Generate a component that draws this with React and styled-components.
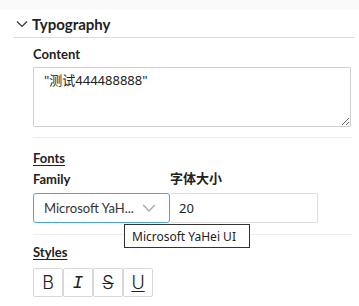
import React from 'react'
import styled, { createGlobalStyle } from 'styled-components'

const Global = createGlobalStyle`
  body {
    margin: 0;
    background: #fff;
    font-family: Lato, "Noto Sans", "Noto Sans CJK SC", sans-serif;
    color: #1f1f1f;
  }
`

const Panel = styled.div`
  width: 359px;
  height: 306px;
  overflow: hidden;
  background: #fff;
`

const TopBand = styled.div`
  height: 10px;
  background: #fafafa;
`

const Header = styled.div`
  display: flex;
  align-items: center;
  gap: 4px;
  height: 28px;
  margin: 0 4px 0 13px;
  padding-left: 3px;
  border-bottom: 1px solid #dcdcdc;
  box-sizing: border-box;
  font-size: 15px;
  font-weight: 700;
  color: #222;
`

const Body = styled.div`
  padding: 0 7px 0 33px;
`

const Label = styled.div`
  height: ${p => p.h || 20}px;
  display: flex;
  align-items: flex-end;
  font-size: 13px;
  font-weight: 700;
  color: #222;
  text-decoration: ${p => (p.u ? 'underline' : 'none')};
  text-underline-offset: 2px;
`

const TextArea = styled.textarea`
  display: block;
  width: 318px;
  height: 60px;
  box-sizing: border-box;
  border: 1px solid #cfcfcf;
  border-radius: 1px;
  padding: 2px 10px;
  font-family: "Noto Sans", "Noto Sans CJK SC", sans-serif;
  font-size: 13px;
  color: #222;
  resize: vertical;
  outline: none;
`

const Divider = styled.div`
  height: 1px;
  background: #eeeeee;
  margin-top: ${p => p.mt}px;
`

const Row = styled.div`
  display: flex;
`

const Col = styled.div`
  width: ${p => p.w}px;
  position: relative;
`

const Select = styled.div`
  height: 30px;
  box-sizing: border-box;
  border: 1px solid #4aa3f0;
  border-radius: 3px;
  display: flex;
  align-items: center;
  justify-content: space-between;
  padding: 0 13px 0 10px;
  font-size: 13px;
  color: #333;
`

const Input = styled.div`
  height: 30px;
  box-sizing: border-box;
  border: 1px solid #dedede;
  border-left: none;
  display: flex;
  align-items: center;
  padding-left: 9px;
  font-family: "Noto Sans", sans-serif;
  font-size: 13px;
  color: #222;
`

const Tooltip = styled.div`
  position: absolute;
  left: 91px;
  top: 31px;
  width: 126px;
  height: 24px;
  box-sizing: border-box;
  border: 1px solid #333;
  background: #fff;
  font-family: "Noto Sans", sans-serif;
  font-size: 12px;
  color: #222;
  display: flex;
  align-items: center;
  padding-left: 7px;
  white-space: nowrap;
  z-index: 2;
`

const Buttons = styled.div`
  display: flex;
  margin-top: 8px;
`

const StyleButton = styled.div`
  width: 30px;
  height: 29px;
  box-sizing: border-box;
  border: 1px solid #d8d8d8;
  border-radius: 2px;
  display: flex;
  align-items: center;
  justify-content: center;
  font-family: ${p => (p.mono ? '"Liberation Mono", monospace' : 'Inter, "Noto Sans", sans-serif')};
  font-weight: 300;
  font-size: 18px;
  color: #222;
  font-style: ${p => (p.i ? 'italic' : 'normal')};
  text-decoration: ${p => p.deco || 'none'};
  text-decoration-thickness: 1px;
  text-underline-offset: 2px;
`

const Chevron = ({ size = 12, color = '#333' }) => (
  <svg width={size} height={size} viewBox="0 0 12 12" fill="none">
    <path d="M1 3.5 L6 8.5 L11 3.5" stroke={color} strokeWidth="1.2" />
  </svg>
)

export default function App() {
  return (
    <Panel>
      <Global />
      <TopBand />
      <Header>
        <Chevron size={12} color="#333" />
        <span>Typography</span>
      </Header>
      <Body>
        <Label h={24}>Content</Label>
        <div style={{ height: 5 }} />
        <TextArea defaultValue={'"测试444488888"'} />
        <Divider mt={10} />
        <Label h={28} u>Fonts</Label>
        <Row>
          <Label h={21} style={{ width: 137 }}>Family</Label>
          <Label h={21}>字体大小</Label>
        </Row>
        <Row style={{ marginTop: 6 }}>
          <Col w={137}>
            <Select>
              <span>Microsoft YaH...</span>
              <Chevron size={14} color="#aaa" />
            </Select>
            <Tooltip>Microsoft YaHei UI</Tooltip>
          </Col>
          <Col w={148}>
            <Input>20</Input>
          </Col>
        </Row>
        <Divider mt={11} />
        <Label h={25} u>Styles</Label>
        <Buttons>
          <StyleButton>B</StyleButton>
          <StyleButton i mono>I</StyleButton>
          <StyleButton deco="line-through">S</StyleButton>
          <StyleButton deco="underline">U</StyleButton>
        </Buttons>
      </Body>
    </Panel>
  )
}
